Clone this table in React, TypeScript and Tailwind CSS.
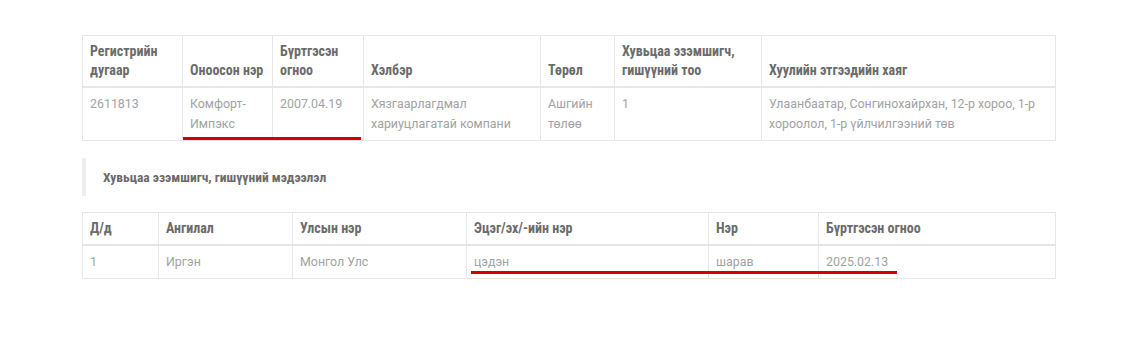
import React from "react";

const th =
  "border border-[#e6e6e6] border-b-2 px-[7px] py-[6px] text-left align-bottom text-[14px] leading-[19px] font-bold text-[#6b6b6b] [font-family:'Roboto_Condensed','Liberation_Sans_Narrow',Roboto,sans-serif]";
const td =
  "border border-[#e6e6e6] px-[7px] py-[6px] text-left align-top text-[12.4px] leading-[20px] font-normal text-[#a2a2a2] [font-family:Roboto,sans-serif]";

export default function App() {
  return (
    <div className="min-h-[346px] w-[1137px] bg-white pt-[35px] pl-[82px]">
      <div className="relative w-[973px]">
        <table className="w-[973px] table-fixed border-collapse">
          <colgroup>
            <col className="w-[100px]" />
            <col className="w-[90px]" />
            <col className="w-[91px]" />
            <col className="w-[177px]" />
            <col className="w-[74px]" />
            <col className="w-[147px]" />
            <col className="w-[294px]" />
          </colgroup>
          <thead>
            <tr>
              <th className={th}>Регистрийн дугаар</th>
              <th className={th}>Оноосон нэр</th>
              <th className={th}>Бүртгэсэн огноо</th>
              <th className={th}>Хэлбэр</th>
              <th className={th}>Төрөл</th>
              <th className={th}>Хувьцаа эзэмшигч, гишүүний тоо</th>
              <th className={th}>Хуулийн этгээдийн хаяг</th>
            </tr>
          </thead>
          <tbody>
            <tr>
              <td className={td}>2611813</td>
              <td className={td}>Комфорт-Импэкс</td>
              <td className={td}>2007.04.19</td>
              <td className={td}>Хязгаарлагдмал хариуцлагатай компани</td>
              <td className={td}>Ашгийн төлөө</td>
              <td className={td}>1</td>
              <td className={td}>Улаанбаатар, Сонгинохайрхан, 12-р хороо, 1-р хороолол, 1-р үйлчилгээний төв</td>
            </tr>
          </tbody>
        </table>
        <div className="absolute left-[101px] top-[102px] h-[3px] w-[178px] bg-[#d40000]" />
      </div>

      <div className="mt-[17px] flex h-[38px] w-[973px] items-center border-l-4 border-[#eeeeee] pl-[17px] text-[13.5px] font-bold text-[#6b6b6b] [font-family:'Roboto_Condensed','Liberation_Sans_Narrow',Roboto,sans-serif]">
        Хувьцаа эзэмшигч, гишүүний мэдээлэл
      </div>

      <div className="relative mt-[16px] w-[973px]">
        <table className="w-[973px] table-fixed border-collapse">
          <colgroup>
            <col className="w-[76px]" />
            <col className="w-[134px]" />
            <col className="w-[174px]" />
            <col className="w-[242px]" />
            <col className="w-[110px]" />
            <col className="w-[237px]" />
          </colgroup>
          <thead>
            <tr>
              <th className={th}>Д/д</th>
              <th className={th}>Ангилал</th>
              <th className={th}>Улсын нэр</th>
              <th className={th}>Эцэг/эх/-ийн нэр</th>
              <th className={th}>Нэр</th>
              <th className={th}>Бүртгэсэн огноо</th>
            </tr>
          </thead>
          <tbody>
            <tr>
              <td className={td}>1</td>
              <td className={td}>Иргэн</td>
              <td className={td}>Монгол Улс</td>
              <td className={td}>цэдэн</td>
              <td className={td}>шарав</td>
              <td className={td}>2025.02.13</td>
            </tr>
          </tbody>
        </table>
        <div className="absolute left-[389px] top-[59px] h-[3px] w-[426px] bg-[#d40000]" />
      </div>
    </div>
  );
}
